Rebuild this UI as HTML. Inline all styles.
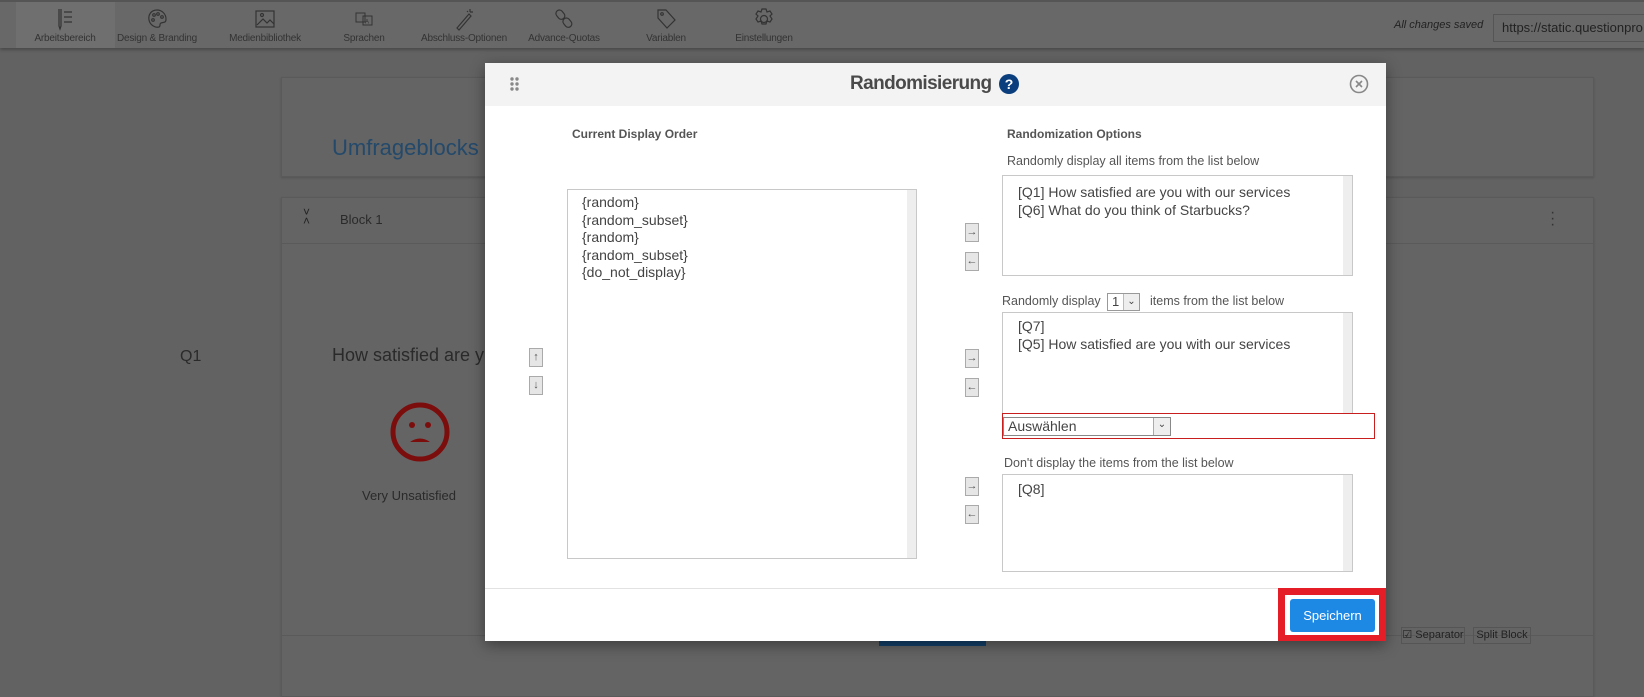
<!DOCTYPE html>
<html><head><meta charset="utf-8"><style>
*{margin:0;padding:0;box-sizing:border-box}
body{width:1644px;height:691px;overflow:hidden;background:#626262;font-family:"Liberation Sans",sans-serif;position:relative;color:#2e2e2e}
.a{position:absolute}
.tb{left:0;top:0;width:1644px;height:48px;background:#686868;border-top:2px solid #555;box-shadow:0 2px 3px rgba(0,0,0,.25)}
.ti{position:absolute;top:0;height:46px;text-align:center;font-size:10px;color:#333;letter-spacing:-0.2px}
.ti .l{position:absolute;top:31px;left:0;right:0;white-space:nowrap}
.ti svg{position:absolute;top:5px;left:50%;margin-left:-11px}
.card{background:#646464;border:1px solid #5a5a5a;box-shadow:0 1px 2px rgba(0,0,0,.15)}
.modal{left:485px;top:63px;width:901px;height:578px;background:#fff;box-shadow:0 4px 14px rgba(0,0,0,.4)}
.hdr{position:absolute;left:0;top:0;width:901px;height:43px;background:#f3f3f3}
.box{position:absolute;border:1px solid #c8c8c8;background:#fff;font-size:14px;color:#444;line-height:17.5px}
.box .sb{position:absolute;right:0;top:0;bottom:0;width:9px;background:#eee}
.btn{position:absolute;width:14px;height:19px;background:#e6e6e6;border:1px solid #aaa;font-size:11px;line-height:16px;text-align:center;color:#555}
.lbl{position:absolute;font-size:12.5px;color:#555}
.bold{font-weight:bold;font-size:12px;color:#555}
</style></head><body>
<div class="a tb">
 <div class="a" style="left:16px;top:0;width:99px;height:46px;background:#6f6f6f"></div>
 <div class="ti" style="left:15px;width:100px"><svg width="22" height="24" viewBox="0 0 22 24" fill="none" stroke="#333" stroke-width="1.2"><path d="M5 2v17l1 3 1-3V2M10 5h8M10 10h8M10 15h8"/></svg><span class="l">Arbeitsbereich</span></div>
 <div class="ti" style="left:107px;width:100px"><svg width="22" height="24" viewBox="0 0 22 24" fill="none" stroke="#333" stroke-width="1.2"><path d="M11 3C5 3 2 8 3 13c1 5 6 8 10 7 2-1 0-3 2-4 3-1 5 0 5-4 0-5-4-9-9-9z"/><circle cx="8" cy="8" r="1.3"/><circle cx="12" cy="7" r="1.3"/><circle cx="16" cy="10" r="1.3"/><circle cx="7" cy="13" r="1.3"/></svg><span class="l">Design &amp; Branding</span></div>
 <div class="ti" style="left:215px;width:100px"><svg width="22" height="24" viewBox="0 0 22 24" fill="none" stroke="#333" stroke-width="1.2"><rect x="2" y="4" width="18" height="16"/><path d="M3 18l6-6 4 4 3-3 4 4"/><circle cx="8" cy="8" r="1.5"/></svg><span class="l">Medienbibliothek</span></div>
 <div class="ti" style="left:314px;width:100px"><svg width="22" height="24" viewBox="0 0 22 24" fill="none" stroke="#333" stroke-width="1"><rect x="3" y="6" width="9" height="9"/><rect x="10" y="9" width="9" height="9"/><text x="12" y="16.5" font-size="6" fill="#333" stroke="none">A</text></svg><span class="l">Sprachen</span></div>
 <div class="ti" style="left:414px;width:100px"><svg width="22" height="24" viewBox="0 0 22 24" fill="none" stroke="#333" stroke-width="1.2"><path d="M4 21L16 7l2 2L6 23zM17 2v3M20 5h-3M14 4l1 1"/></svg><span class="l">Abschluss-Optionen</span></div>
 <div class="ti" style="left:514px;width:100px"><svg width="22" height="24" viewBox="0 0 22 24" fill="none" stroke="#333" stroke-width="1.2"><rect x="4" y="3" width="7" height="10" rx="3.5" transform="rotate(-40 7 8)"/><rect x="11" y="11" width="7" height="10" rx="3.5" transform="rotate(-40 14 16)"/></svg><span class="l">Advance-Quotas</span></div>
 <div class="ti" style="left:616px;width:100px"><svg width="22" height="24" viewBox="0 0 22 24" fill="none" stroke="#333" stroke-width="1.2"><path d="M3 3h8l9 10-8 8-9-10z"/><circle cx="7" cy="7" r="1.3"/></svg><span class="l">Variablen</span></div>
 <div class="ti" style="left:714px;width:100px"><svg width="22" height="24" viewBox="0 0 22 24" fill="none" stroke="#333" stroke-width="1.2"><circle cx="11" cy="12" r="3.5"/><path d="M9 2h4l1 3 3-1 2 3-2 2 2 3-2 3-3-1-1 3H9l-1-3-3 1-2-3 2-3-2-2 2-3 3 1z"/></svg><span class="l">Einstellungen</span></div>
 <div class="a" style="left:1394px;top:17px;font-size:11px;font-style:italic;color:#222">All changes saved</div>
 <div class="a" style="left:1493px;top:12px;width:160px;height:28px;border:1px solid #555;border-right:none;font-size:13px;line-height:26px;padding-left:8px;color:#222;white-space:nowrap;overflow:hidden">https://static.questionpro</div>
</div>
<div class="a card" style="left:281px;top:77px;width:1313px;height:100px"></div>
<div class="a" style="left:332px;top:135px;font-size:22px;color:#23496b">Umfrageblocks</div>
<div class="a card" style="left:281px;top:197px;width:1313px;height:500px"></div>
<div class="a" style="left:281px;top:243px;width:1313px;height:1px;background:#5a5a5a"></div>
<div class="a" style="left:281px;top:635px;width:1313px;height:1px;background:#5a5a5a"></div>
<div class="a" style="left:303px;top:208px;font-size:12px;color:#222;line-height:9px">&#x2C5;<br>&#x2C4;</div>
<div class="a" style="left:340px;top:212px;font-size:13px;color:#2a2a2a">Block 1</div>
<div class="a" style="left:1550px;top:210px;font-size:16px;color:#333;line-height:6px">·<br>·<br>·</div>
<div class="a" style="left:180px;top:348px;font-size:16px;color:#2a2a2a">Q1</div>
<div class="a" style="left:332px;top:345px;font-size:18px;color:#2a2a2a">How satisfied are y</div>
<svg class="a" style="left:389px;top:401px" width="62" height="62" viewBox="0 0 62 62"><circle cx="31" cy="31" r="27" fill="none" stroke="#7c0d0d" stroke-width="5"/><circle cx="23" cy="24" r="3" fill="#7c0d0d"/><circle cx="39" cy="24" r="3" fill="#7c0d0d"/><path d="M21 41q10-7 20 0z" fill="#7c0d0d"/></svg>
<div class="a" style="left:362px;top:488px;font-size:13px;color:#2a2a2a">Very Unsatisfied</div>
<div class="a" style="left:879px;top:635px;width:107px;height:11px;background:#13406a"></div>
<div class="a" style="left:1401px;top:627px;width:64px;height:17px;border:1px solid #555;font-size:11px;line-height:15px;text-align:center;color:#222;white-space:nowrap">☑ Separator</div>
<div class="a" style="left:1473px;top:627px;width:58px;height:17px;border:1px solid #555;font-size:11px;line-height:15px;text-align:center;color:#222;white-space:nowrap">Split Block</div>

<div class="a modal">
 <div class="hdr">
  <svg class="a" style="left:25px;top:14px" width="10" height="15"><g fill="#888"><circle cx="2" cy="2" r="1.7"/><circle cx="7" cy="2" r="1.7"/><circle cx="2" cy="7" r="1.7"/><circle cx="7" cy="7" r="1.7"/><circle cx="2" cy="12" r="1.7"/><circle cx="7" cy="12" r="1.7"/></g></svg>
  <div class="a" style="left:365px;top:10px;font-size:19px;color:#4a4a4a;font-weight:bold;letter-spacing:-0.6px">Randomisierung</div>
  <svg class="a" style="left:514px;top:11px" width="20" height="20"><circle cx="10" cy="10" r="10" fill="#0b3e7d"/><text x="10" y="15" text-anchor="middle" font-size="14" font-weight="bold" fill="#fff" font-family="Liberation Sans">?</text></svg>
  <svg class="a" style="left:864px;top:11px" width="20" height="20"><circle cx="10" cy="10" r="8.5" fill="none" stroke="#888" stroke-width="1.6"/><path d="M7 7l6 6M13 7l-6 6" stroke="#888" stroke-width="1.6"/></svg>
 </div>
 <div class="a bold" style="left:87px;top:64px">Current Display Order</div>
 <div class="box" style="left:82px;top:126px;width:350px;height:370px;padding:4px 0 0 14px">
  <div class="sb"></div>{random}<br>{random_subset}<br>{random}<br>{random_subset}<br>{do_not_display}
 </div>
 <div class="btn" style="left:44px;top:285px">↑</div>
 <div class="btn" style="left:44px;top:313px">↓</div>
 <div class="btn" style="left:480px;top:160px">→</div>
 <div class="btn" style="left:480px;top:189px">←</div>
 <div class="btn" style="left:480px;top:286px">→</div>
 <div class="btn" style="left:480px;top:315px">←</div>
 <div class="btn" style="left:480px;top:414px">→</div>
 <div class="btn" style="left:480px;top:442px">←</div>
 <div class="a bold" style="left:522px;top:64px">Randomization Options</div>
 <div class="lbl" style="left:522px;top:91px">Randomly display all items from the list below</div>
 <div class="box" style="left:517px;top:112px;width:351px;height:101px;padding:8px 0 0 15px">
  <div class="sb"></div>[Q1] How satisfied are you with our services<br>[Q6] What do you think of Starbucks?
 </div>
 <div class="lbl" style="left:517px;top:231px">Randomly display</div>
 <div class="a" style="left:622px;top:230px;width:33px;height:18px;border:1px solid #999;font-size:13px;line-height:16px;padding-left:4px;color:#444">1<span style="position:absolute;right:0;top:0;width:16px;height:16px;border-left:1px solid #bbb;background:#eee;font-size:10px;text-align:center">⌄</span></div>
 <div class="lbl" style="left:665px;top:231px">items from the list below</div>
 <div class="box" style="left:517px;top:249px;width:351px;height:102px;padding:5px 0 0 15px">
  <div class="sb"></div>[Q7]<br>[Q5] How satisfied are you with our services
 </div>
 <div class="a" style="left:517px;top:350px;width:373px;height:26px;border:1px solid #c81e1e"></div>
 <div class="a" style="left:518px;top:354px;width:168px;height:19px;border:1px solid #888;font-size:14px;line-height:17px;padding-left:4px;color:#444;background:#fff">Auswählen<span style="position:absolute;right:0;top:0;width:17px;height:17px;border-left:1px solid #aaa;background:#eee;font-size:10px;text-align:center;line-height:14px">⌄</span></div>
 <div class="lbl" style="left:519px;top:393px">Don't display the items from the list below</div>
 <div class="box" style="left:517px;top:411px;width:351px;height:98px;padding:6px 0 0 15px">
  <div class="sb"></div>[Q8]
 </div>
 <div class="a" style="left:0;top:525px;width:901px;height:1px;background:#e2e2e2"></div>
 <div class="a" style="left:793px;top:525px;width:108px;height:53px;background:#e41d26"></div>
 <div class="a" style="left:800px;top:532px;width:94px;height:40px;background:#fff"></div>
 <div class="a" style="left:805px;top:536px;width:85px;height:33px;background:#1e88e5;border-radius:3px;color:#fff;font-size:13px;text-align:center;line-height:33px">Speichern</div>
</div>
</body></html>
